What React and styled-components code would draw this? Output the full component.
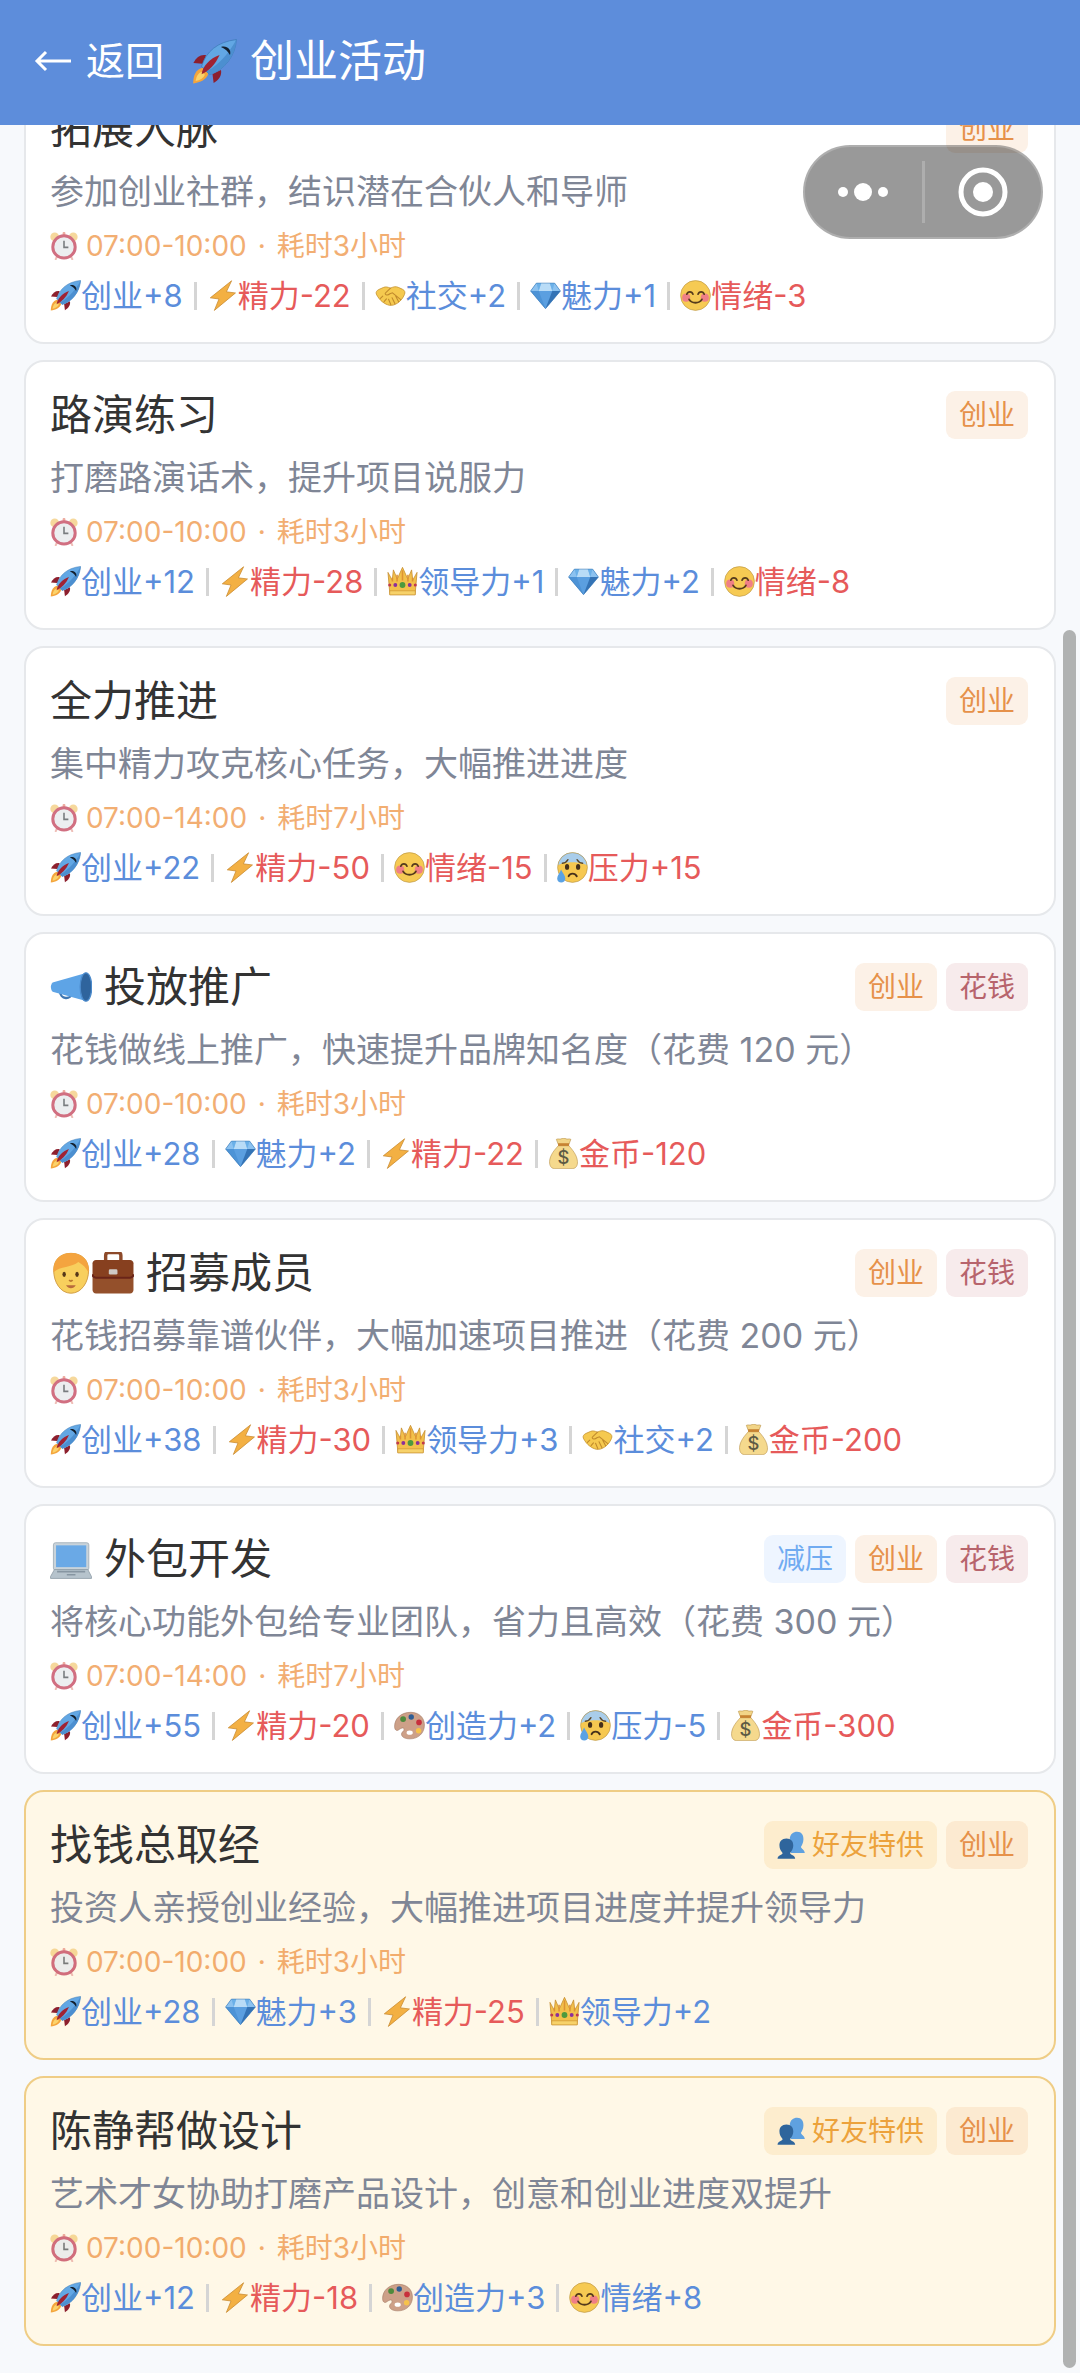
import React from 'react';
import styled, { createGlobalStyle, css } from 'styled-components';

const GlobalStyle = createGlobalStyle`
  * { box-sizing: border-box; }
  html { scrollbar-width: none; }
  body {
    margin: 0;
    background: #f7f9fc;
    color: #333;
    font-family: Inter, "Noto Sans CJK SC", sans-serif;
  }
  button { font: inherit; color: inherit; border: 0; padding: 0; background: none; cursor: pointer; }
  h1, h2, p, ul { margin: 0; padding: 0; font-weight: 400; }
  ul { list-style: none; }
`;

/* ---------- icons ---------- */

const Glyph = styled.svg`
  display: block;
  flex: none;
  width: ${(p) => p.$size}px;
  height: ${(p) => p.$size}px;
`;

const drawings = {
  rocket: (
    <>
      <path d="M10 11.5 C6 10.8 3.2 13 1 17 L7.5 17.6Z" fill="#8d1f2d" />
      <path d="M20.6 22 C21.4 26 19 29 15.4 31.2 L14.6 24.8Z" fill="#8d1f2d" />
      <path d="M7.6 20.5 C2.6 21.5 1 26 .8 31.6 C6 31 10.4 29 11.6 24.6Z" fill="#f4a53c" />
      <path d="M6.8 23.2 C4 24.4 3 27 2.6 29.8 C5.6 29.2 8 28 9.2 25.4Z" fill="#fbd36b" />
      <path d="M6.8 19.4 C10 9 18 2 31.6 .4 C30.6 12.4 23 22 12.6 25.4Z" fill="#62a7e4" stroke="#3b78b5" strokeWidth=".5" />
      <path d="M31.6 .4 C30.6 12.4 23 22 12.6 25.4 L10.4 23 C20 18 27 9 31.6 .4Z" fill="#4c8fd0" />
      <path d="M6.8 25 C7.6 19.6 12.6 13.6 19.6 11.4 C16.6 18 12.4 22.4 6.8 25Z" fill="#a02333" />
      <path d="M20.6 5.6 C24.6 4.2 28.4 7.4 27 11.4 C25.6 8.6 23.6 6.8 20.6 5.6Z" fill="#13202f" />
    </>
  ),
  bolt: (
    <path d="M25.4 .8 L3.4 18.4 L12.4 19.6 L7.6 31.4 L29.4 13.4 L20 12.2Z" fill="#f3b043" stroke="#c98a31" strokeWidth=".8" strokeLinejoin="round" />
  ),
  handshake: (
    <>
      <path d="M1.4 14.6 C.6 12.6 2 10.6 4 9.8 L9 7.6 C11 6.8 13 7.2 16 8.4 C19 7 21.6 6.4 24 7.6 L28.4 9.6 C30.8 10.8 31.4 12.8 30.4 15 C29 18.4 26.6 21.6 23.6 23.6 C20.4 25.8 17.6 26.6 14.6 26 C10.6 25.2 4.6 21.4 1.4 14.6Z" fill="#f5c94f" stroke="#c99837" strokeWidth=".9" />
      <path d="M16 8.4 L10.6 13.6 C10.2 15.8 13.4 16 15.4 14.2 L18 13.2 L26.6 20.2 M21.4 16.8 L24.4 22.4 M17.6 18.4 L20.6 24.6 M14 19.8 L16.4 25.6 M5.6 19 L8 16.6 M9.4 22.4 L11.8 19.4" fill="none" stroke="#c08a2c" strokeWidth="1.1" strokeLinecap="round" />
    </>
  ),
  diamond: (
    <>
      <path d="M6.6 3.2 H25.4 L31.4 11.4 L16 29.6 .6 11.4Z" fill="#5b9fe0" />
      <path d="M6.6 3.2 H25.4 L31.4 11.4 H.6Z" fill="#8cc2f0" />
      <path d="M11.6 3.2 H20.4 L23 11.4 H9Z" fill="#b9dcf7" />
      <path d="M.6 11.4 H9 L16 29.6Z" fill="#4d93d6" />
      <path d="M23 11.4 H31.4 L16 29.6Z" fill="#3473b5" />
      <path d="M6.6 3.2 L9 11.4 L11.6 3.2Z M25.4 3.2 L23 11.4 L20.4 3.2Z" fill="#6bb0e8" />
      <path d="M6.6 3.2 H25.4 L31.4 11.4 L16 29.6 .6 11.4Z" fill="none" stroke="#3f7bb6" strokeWidth=".6" />
    </>
  ),
  smile: (
    <>
      <circle cx="16" cy="16" r="15.4" fill="#f6ca53" stroke="#b58f3f" strokeWidth=".6" />
      <circle cx="6.4" cy="18.2" r="4.2" fill="#ef7f86" />
      <circle cx="25.6" cy="18.2" r="4.2" fill="#ef7f86" />
      <path d="M7 14.6 C8 11.4 12.4 11.4 13.4 14.6 M18.6 14.6 C19.6 11.4 24 11.4 25 14.6" fill="none" stroke="#553b1c" strokeWidth="1.7" strokeLinecap="round" />
      <path d="M9.4 20 C12 24.6 20 24.6 22.6 20" fill="none" stroke="#553b1c" strokeWidth="1.9" strokeLinecap="round" />
    </>
  ),
  sweat: (
    <>
      <circle cx="16" cy="16" r="15.4" fill="#f6c850" />
      <path d="M.8 14 C2 5.4 8 .6 16 .6 C24 .6 30 5.4 31.2 14 C26 9.4 6 9.4 .8 14Z" fill="#a9cdea" />
      <circle cx="16" cy="16" r="15.4" fill="none" stroke="#b58f3f" strokeWidth=".6" />
      <path d="M5.6 11.6 C8.4 11.4 10.2 10 11.2 8 M26.4 11.6 C23.6 11.4 21.8 10 20.8 8" fill="none" stroke="#5b4526" strokeWidth="1.6" strokeLinecap="round" />
      <ellipse cx="10.4" cy="15.4" rx="2.2" ry="3" fill="#45301a" />
      <ellipse cx="21.8" cy="15.4" rx="2.2" ry="3" fill="#45301a" />
      <path d="M12 25 C13.6 21.4 18.4 21.4 20.4 25" fill="none" stroke="#45301a" strokeWidth="2" strokeLinecap="round" />
      <path d="M4.2 18 C5.4 21 8.6 24 8.6 27.4 C8.6 30 6.6 31.6 4.4 31.6 C2 31.6 .2 30 .2 27.4 C.2 24 3.2 21 4.2 18Z" fill="#5aa2e4" />
    </>
  ),
  crown: (
    <>
      <path d="M3 29.6 L1 6.6 L5.4 14.6 L6.6 4 L10.6 13.4 L16 1.4 L21.4 13.4 L25.4 4 L26.6 14.6 L31 6.6 L29 29.6Z" fill="#f3c04b" stroke="#c58c2e" strokeWidth=".8" strokeLinejoin="round" />
      <path d="M10.4 16 V9 M16 15 V4.4 M21.6 16 V9 M5.6 16 V12 M26.4 16 V12" stroke="#dd9434" strokeWidth="1.6" />
      <path d="M2.8 25.6 H29.2 V29.8 H2.8Z" fill="#f7d26a" stroke="#c58c2e" strokeWidth=".6" />
      <circle cx="16" cy="19.6" r="3" fill="#4d9a3d" />
      <circle cx="8.6" cy="19.6" r="2" fill="#8b2f9b" />
      <circle cx="23.4" cy="19.6" r="2" fill="#8b2f9b" />
      <circle cx="2.8" cy="19.6" r="1.6" fill="#c03a4b" />
      <circle cx="29.2" cy="19.6" r="1.6" fill="#c03a4b" />
    </>
  ),
  money: (
    <>
      <path d="M10.6 6.6 L8.6 1.4 C11 .2 12 1.8 13.6 .8 C15.4 .2 17 .2 18.6 .8 C20 1.8 21.4 .2 23.6 1.4 L21.6 6.6Z" fill="#f2d588" stroke="#b78f44" strokeWidth=".6" />
      <path d="M10.6 8 C7 12 2 17.6 1.6 24.2 C1.4 29 3.6 31.6 7 31.6 H25 C28.4 31.6 30.8 29 30.4 24.2 C30 17.6 25 12 21.6 8Z" fill="#f5d98d" stroke="#b78f44" strokeWidth=".6" />
      <path d="M10.4 5.4 H21.8 V8.2 H10.4Z" fill="#c78332" />
      <text x="16" y="26.4" textAnchor="middle" fontFamily="Inter, sans-serif" fontSize="19" fontWeight="500" fill="#5d5b45">$</text>
    </>
  ),
  palette: (
    <>
      <path d="M17.4 2.4 C26 2.6 31.4 7.8 31.4 15.6 C31.4 24 25 29.8 16.4 29.8 C12 29.8 8.4 28.4 7.8 25.6 C7.2 22.6 11 21.8 10.4 19.6 C9.8 17.6 7.4 18.6 5 20.4 C2.6 22.2 .6 20.4 .6 17 C.6 8.4 8 2.2 17.4 2.4Z" fill="#cda088" stroke="#9f7661" strokeWidth=".6" />
      <ellipse cx="16.2" cy="23.4" rx="3.2" ry="2.2" fill="#fff" />
      <circle cx="9.4" cy="9.4" r="3" fill="#4f8a3d" />
      <circle cx="17.8" cy="7.2" r="2.8" fill="#2f5d93" />
      <circle cx="25.8" cy="12.8" r="2.9" fill="#c8303d" />
      <circle cx="25.4" cy="21.4" r="2.8" fill="#f6c24b" />
    </>
  ),
  clock: (
    <>
      <path d="M8.4 27 L6.6 31 M23.6 27 L25.4 31" stroke="#e9a9a0" strokeWidth="2.4" strokeLinecap="round" />
      <circle cx="5.4" cy="5.6" r="5" fill="#f3cc7b" />
      <circle cx="26.6" cy="5.6" r="5" fill="#f3cc7b" />
      <rect x="14.4" y="0" width="3.2" height="4" rx="1.2" fill="#e88f80" />
      <circle cx="16" cy="17" r="12.8" fill="#e6e9ec" stroke="#c23f58" strokeWidth="3.4" />
      <path d="M16 10 V17.6 H21" fill="none" stroke="#4c5155" strokeWidth="1.8" />
    </>
  ),
  megaphone: (
    <>
      <path d="M7.6 18.8 C7.6 26 16 26 17.6 20" fill="none" stroke="#3f77b2" strokeWidth="1.8" />
      <path d="M2 12.6 L27.4 5.4 V26.6 L2 19.6 C.2 17.6 .2 14.6 2 12.6Z" fill="#5ea4e6" />
      <ellipse cx="27.4" cy="16" rx="4.4" ry="10.8" fill="#2f649d" stroke="#4b8acb" strokeWidth="1" />
    </>
  ),
  person: (
    <>
      <path d="M2.8 14 C2.8 6 8 1 16 1 C24 1 29.4 6 29.4 14 C29.4 23 24 31.4 16 31.4 C8 31.4 2.8 23 2.8 14Z" fill="#f8cf5d" stroke="#cf9b45" strokeWidth=".7" />
      <path d="M2.8 15.4 C1.8 6 8 .8 16 .8 C25 .8 30.6 7 29.4 16 C28 12.6 25.6 10 21.6 7.6 C17 11.6 7 11 2.8 15.4Z" fill="#f4a43f" />
      <ellipse cx="10.8" cy="17" rx="1.3" ry="2" fill="#553719" />
      <ellipse cx="20.6" cy="17" rx="1.3" ry="2" fill="#553719" />
      <path d="M14.6 21.4 C15.4 22.4 16.4 22.4 17.2 21.4" fill="none" stroke="#b9772f" strokeWidth="1.3" />
      <path d="M12.2 25.4 C14 28.4 18 28.4 19.6 25.4Z" fill="#b86a3c" />
    </>
  ),
  briefcase: (
    <>
      <path d="M10.4 7 V2.6 C10.4 1 11.2 .4 12.6 .4 H19.8 C21.2 .4 22 1 22 2.6 V7" fill="none" stroke="#8d4a2a" strokeWidth="2.6" />
      <path d="M3 6 H29 C30.4 6 31.6 7.2 31.6 8.6 V19.4 H.4 V8.6 C.4 7.2 1.6 6 3 6Z" fill="#87401f" />
      <path d="M.4 19.4 H31.6 V29 C31.6 30.4 30.4 31.6 29 31.6 H3 C1.6 31.6 .4 30.4 .4 29Z" fill="#94502b" />
      <path d="M.4 17 C.4 18.6 1.6 19.6 3 19.6 H29 C30.4 19.6 31.6 18.6 31.6 17" fill="none" stroke="#6a2418" strokeWidth="1.4" />
      <rect x="12.8" y="13.2" width="6.6" height="4" rx="1" fill="#cfcac6" />
    </>
  ),
  laptop: (
    <>
      <rect x="2.6" y="3.6" width="27" height="21" rx="1.6" fill="#c9d3da" stroke="#9aa8b2" strokeWidth=".6" />
      <rect x="4.6" y="5.6" width="23" height="16.6" fill="#6aa9e6" />
      <path d="M3.4 24 H28.8 L31.6 29.4 V30.8 H.4 V29.4Z" fill="#b6c3cc" stroke="#8d9ba6" strokeWidth=".6" />
      <path d="M5.4 25.6 H26.8 M12.8 28 H19.4" stroke="#8796a2" strokeWidth="1.3" />
    </>
  ),
  friends: (
    <>
      <path d="M23 .8 C28 .8 30.4 4.4 30.2 9.6 C30 13.6 28.6 16 27.4 18 C27.4 20.4 31.4 21 31.8 25 H16 L14.6 8 C15.4 3.6 18.4 .8 23 .8Z" fill="#5fa1e0" />
      <path d="M10.8 8.6 C16 8.6 18.8 12 18.6 16.8 C18.4 20.6 16.6 23 15 25.2 C15 27.6 20.6 27.4 20.8 31.6 H.6 C.8 27.4 6.4 27.6 6.4 25.2 C4.8 23 2.8 20.6 2.8 16.8 C2.6 12 5.6 8.6 10.8 8.6Z" fill="#2f659c" />
    </>
  ),
};

const Icon = ({ name, size }) => (
  <Glyph $size={size} viewBox="0 0 32 32" aria-hidden="true">
    {drawings[name]}
  </Glyph>
);

/* ---------- header ---------- */

const Page = styled.div`
  position: relative;
  min-height: 100vh;
`;

const Header = styled.header`
  position: sticky;
  top: 0;
  z-index: 2;
  display: flex;
  align-items: center;
  gap: 28px;
  height: 125px;
  padding: 0 34px 3px;
  background: #5d8ddb;
  color: #fff;
`;

const BackButton = styled.button`
  display: flex;
  align-items: center;
  gap: 14px;
  font-size: 39px;
  line-height: 56px;
`;

const Arrow = styled.svg`
  display: block;
  width: 38px;
  height: 22px;
`;

const PageTitle = styled.h1`
  display: flex;
  align-items: center;
  gap: 13px;
  font-size: 44px;
  line-height: 64px;
`;

/* ---------- floating capsule ---------- */

const Capsule = styled.div`
  position: fixed;
  top: 145px;
  right: 37px;
  z-index: 3;
  display: flex;
  align-items: center;
  width: 240px;
  height: 94px;
  border: 2px solid rgba(255, 255, 255, 0.2);
  border-radius: 47px;
  background: rgba(0, 0, 0, 0.4);
  color: #fff;
`;

const CapsuleButton = styled.button`
  flex: 1;
  display: flex;
  align-items: center;
  justify-content: center;
  height: 100%;
`;

const CapsuleRule = styled.span`
  width: 3px;
  height: 62px;
  background: rgba(255, 255, 255, 0.2);
`;

/* ---------- list ---------- */

/* The list rests scrolled a little way under the header. */
const List = styled.ul`
  display: flex;
  flex-direction: column;
  gap: 16px;
  margin-top: -51px;
  padding: 0 24px 26px;
`;

const Card = styled.li`
  padding: 25px 26px 25px 24px;
  border: 2px solid #e6e8eb;
  border-radius: 20px;
  background: #fff;
  ${(p) =>
    p.$special &&
    css`
      border-color: #efcd86;
      background: #fff8e7;
    `}
`;

const CardHead = styled.div`
  display: flex;
  align-items: center;
  justify-content: space-between;
  height: 56px;
`;

const CardTitle = styled.h2`
  display: flex;
  align-items: center;
  font-size: 42px;
  line-height: 56px;
`;

const TitleText = styled.span`
  margin-left: ${(p) => (p.$indent ? '12px' : '0')};
`;

const Tags = styled.div`
  display: flex;
  gap: 9px;
`;

const tagColors = {
  startup: css`color: #e6914a; background: rgba(230, 126, 34, 0.11);`,
  spend: css`color: #b7646c; background: rgba(176, 58, 70, 0.1);`,
  relax: css`color: #70abf1; background: rgba(84, 160, 255, 0.1);`,
  friend: css`color: #eca23c; background: rgba(236, 160, 40, 0.13);`,
};

const Tag = styled.span`
  display: flex;
  align-items: center;
  gap: 7px;
  padding: 0 13px;
  border-radius: 9px;
  font-size: 28px;
  line-height: 48px;
  ${(p) => tagColors[p.$kind]}
`;

const Description = styled.p`
  margin-top: 11px;
  font-size: 34px;
  line-height: 48px;
  color: #7f8696;
`;

const Schedule = styled.p`
  display: flex;
  align-items: center;
  gap: 8px;
  margin-top: 10px;
  font-size: 28px;
  line-height: 40px;
  color: #ee9344;
  opacity: 0.75;
`;

const Dot = styled.span`
  padding: 0 3px;
`;

const Effects = styled.div`
  display: flex;
  align-items: center;
  margin-top: 8px;
  font-size: 31px;
  line-height: 43px;
`;

const Effect = styled.span`
  display: flex;
  align-items: center;
  color: ${(p) => (p.$good ? '#5b8ddb' : '#e65a5a')};

  &:not(:first-child)::before {
    content: '';
    width: 3px;
    height: 28px;
    margin: 0 10px 0 11px;
    background: #d5d5d5;
  }
`;

/* ---------- scroll indicator ---------- */

const ScrollTrack = styled.div`
  position: fixed;
  top: 125px;
  right: 4px;
  bottom: 5px;
  z-index: 1;
  display: flex;
  flex-direction: column;
  justify-content: flex-end;
  width: 13px;
`;

const ScrollThumb = styled.div`
  height: 77.5%;
  border-radius: 7px;
  background: #b0b2b2;
`;

/* ---------- data ---------- */

const tagLabels = { startup: '创业', spend: '花钱', relax: '减压', friend: '好友特供' };

const up = (icon, text) => ({ icon, text, good: true });
const down = (icon, text) => ({ icon, text, good: false });

const activities = [
  {
    title: '拓展人脉',
    tags: ['startup'],
    desc: '参加创业社群，结识潜在合伙人和导师',
    time: '07:00-10:00',
    cost: '耗时3小时',
    effects: [up('rocket', '创业+8'), down('bolt', '精力-22'), up('handshake', '社交+2'), up('diamond', '魅力+1'), down('smile', '情绪-3')],
  },
  {
    title: '路演练习',
    tags: ['startup'],
    desc: '打磨路演话术，提升项目说服力',
    time: '07:00-10:00',
    cost: '耗时3小时',
    effects: [up('rocket', '创业+12'), down('bolt', '精力-28'), up('crown', '领导力+1'), up('diamond', '魅力+2'), down('smile', '情绪-8')],
  },
  {
    title: '全力推进',
    tags: ['startup'],
    desc: '集中精力攻克核心任务，大幅推进进度',
    time: '07:00-14:00',
    cost: '耗时7小时',
    effects: [up('rocket', '创业+22'), down('bolt', '精力-50'), down('smile', '情绪-15'), down('sweat', '压力+15')],
  },
  {
    icons: ['megaphone'],
    title: '投放推广',
    tags: ['startup', 'spend'],
    desc: '花钱做线上推广，快速提升品牌知名度（花费 120 元）',
    time: '07:00-10:00',
    cost: '耗时3小时',
    effects: [up('rocket', '创业+28'), up('diamond', '魅力+2'), down('bolt', '精力-22'), down('money', '金币-120')],
  },
  {
    icons: ['person', 'briefcase'],
    title: '招募成员',
    tags: ['startup', 'spend'],
    desc: '花钱招募靠谱伙伴，大幅加速项目推进（花费 200 元）',
    time: '07:00-10:00',
    cost: '耗时3小时',
    effects: [up('rocket', '创业+38'), down('bolt', '精力-30'), up('crown', '领导力+3'), up('handshake', '社交+2'), down('money', '金币-200')],
  },
  {
    icons: ['laptop'],
    title: '外包开发',
    tags: ['relax', 'startup', 'spend'],
    desc: '将核心功能外包给专业团队，省力且高效（花费 300 元）',
    time: '07:00-14:00',
    cost: '耗时7小时',
    effects: [up('rocket', '创业+55'), down('bolt', '精力-20'), up('palette', '创造力+2'), up('sweat', '压力-5'), down('money', '金币-300')],
  },
  {
    special: true,
    title: '找钱总取经',
    tags: ['friend', 'startup'],
    desc: '投资人亲授创业经验，大幅推进项目进度并提升领导力',
    time: '07:00-10:00',
    cost: '耗时3小时',
    effects: [up('rocket', '创业+28'), up('diamond', '魅力+3'), down('bolt', '精力-25'), up('crown', '领导力+2')],
  },
  {
    special: true,
    title: '陈静帮做设计',
    tags: ['friend', 'startup'],
    desc: '艺术才女协助打磨产品设计，创意和创业进度双提升',
    time: '07:00-10:00',
    cost: '耗时3小时',
    effects: [up('rocket', '创业+12'), down('bolt', '精力-18'), up('palette', '创造力+3'), up('smile', '情绪+8')],
  },
];

function ActivityCard({ activity }) {
  const { icons = [], title, tags, desc, time, cost, effects, special } = activity;
  return (
    <Card $special={special}>
      <CardHead>
        <CardTitle>
          {icons.map((name) => (
            <Icon key={name} name={name} size={42} />
          ))}
          <TitleText $indent={icons.length > 0}>{title}</TitleText>
        </CardTitle>
        <Tags>
          {tags.map((kind) => (
            <Tag key={kind} $kind={kind}>
              {kind === 'friend' && <Icon name="friends" size={28} />}
              {tagLabels[kind]}
            </Tag>
          ))}
        </Tags>
      </CardHead>
      <Description>{desc}</Description>
      <Schedule>
        <Icon name="clock" size={28} />
        <span>{time}</span>
        <Dot>·</Dot>
        <span>{cost}</span>
      </Schedule>
      <Effects>
        {effects.map(({ icon, text, good }) => (
          <Effect key={text} $good={good}>
            <Icon name={icon} size={31} />
            {text}
          </Effect>
        ))}
      </Effects>
    </Card>
  );
}

export default function App() {
  return (
    <Page>
      <GlobalStyle />
      <Header>
        <BackButton type="button">
          <Arrow viewBox="0 0 38 22" aria-hidden="true">
            <path d="M12 2 L3 11 L12 20 M3 11 H37" fill="none" stroke="#fff" strokeWidth="3" />
          </Arrow>
          返回
        </BackButton>
        <PageTitle>
          <Icon name="rocket" size={45} />
          创业活动
        </PageTitle>
      </Header>
      <Capsule>
        <CapsuleButton type="button" aria-label="更多">
          <svg width="52" height="20" viewBox="0 0 52 20" fill="#fff" aria-hidden="true">
            <circle cx="6" cy="10" r="5" />
            <circle cx="26" cy="10" r="9" />
            <circle cx="46" cy="10" r="5" />
          </svg>
        </CapsuleButton>
        <CapsuleRule />
        <CapsuleButton type="button" aria-label="关闭">
          <svg width="52" height="52" viewBox="0 0 52 52" aria-hidden="true">
            <circle cx="26" cy="26" r="22" fill="none" stroke="#fff" strokeWidth="5" />
            <circle cx="26" cy="26" r="10" fill="#fff" />
          </svg>
        </CapsuleButton>
      </Capsule>
      <List>
        {activities.map((activity) => (
          <ActivityCard key={activity.title} activity={activity} />
        ))}
      </List>
      <ScrollTrack aria-hidden="true">
        <ScrollThumb />
      </ScrollTrack>
    </Page>
  );
}
